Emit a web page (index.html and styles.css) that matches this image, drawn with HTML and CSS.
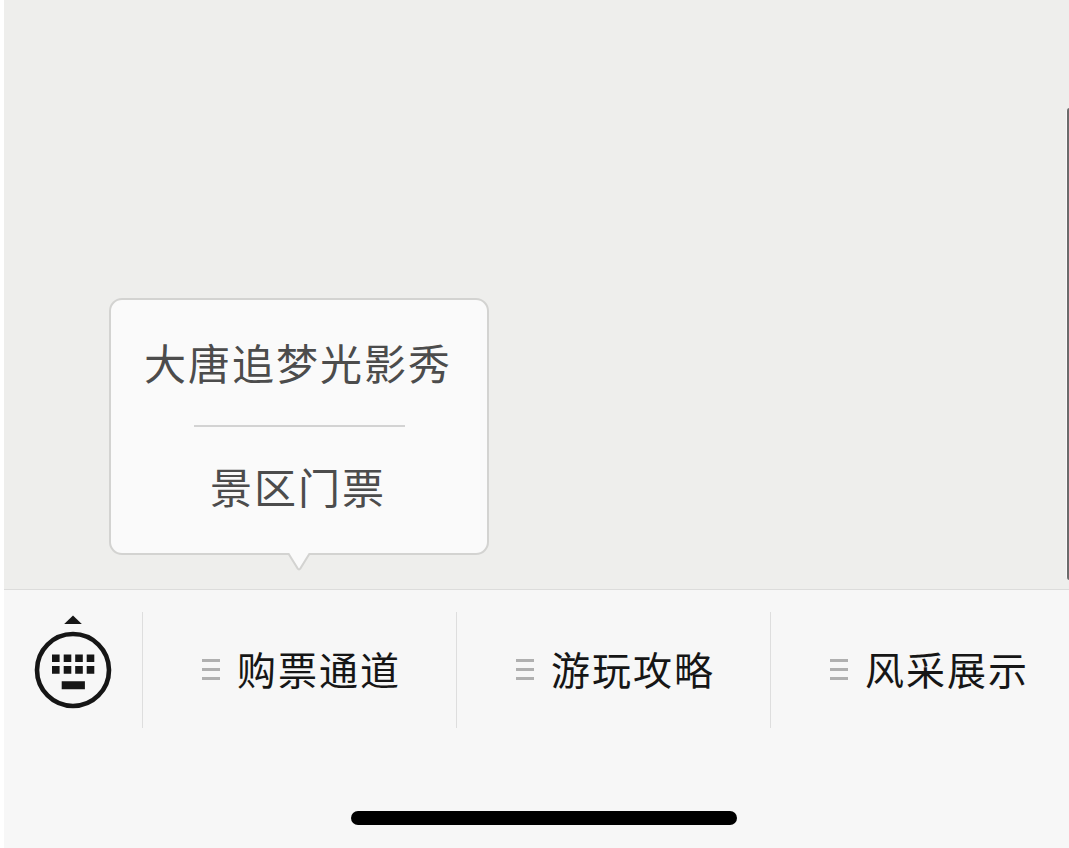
FILE: index.html
```html
<!DOCTYPE html>
<html lang="zh-CN">
<head>
<meta charset="utf-8">
<title>购票通道</title>
<link rel="stylesheet" href="styles.css">
</head>
<body>
<div class="screen">
  <main class="chat">
    <div class="scrollbar"></div>
    <div class="popup">
      <div class="popup-item">大唐追梦光影秀</div>
      <div class="popup-divider"></div>
      <div class="popup-item">景区门票</div>
      <svg class="popup-tail" width="24" height="20" viewBox="0 0 24 20">
        <path d="M0 0H24V1.4H22.3L13.4 16.2Q12 18.2 10.6 16.2L1.7 1.4H0Z" fill="#fafafa"/>
        <path d="M0 2H1.7L10.6 16.4Q12 18.4 13.4 16.4L22.3 2H24" fill="none" stroke="#d3d3d1" stroke-width="2"/>
      </svg>
    </div>
  </main>
  <footer class="bar">
    <nav class="menu">
      <button class="keyboard" aria-label="键盘">
        <svg width="80" height="96" viewBox="0 0 80 96">
          <path d="M31.2 10L40 1.4L48.8 10Z" fill="#161616"/>
          <circle cx="40" cy="56" r="36" fill="none" stroke="#161616" stroke-width="4.6"/>
          <path d="M19 40.5h7.6v7.6H19zM30.7 40.5h7.6v7.6h-7.6zM42.2 40.5h7.6v7.6h-7.6zM53.7 40.5h7.6v7.6h-7.6zM19 52.1h7.6v7.6H19zM30.7 52.1h7.6v7.6h-7.6zM42.2 52.1h7.6v7.6h-7.6zM53.7 52.1h7.6v7.6h-7.6zM28.7 67.3h23.2v8H28.7z" fill="#161616"/>
        </svg>
      </button>
      <div class="tab"><span class="lines"><i></i><i></i><i></i></span><span class="label">购票通道</span></div>
      <div class="tab"><span class="lines"><i></i><i></i><i></i></span><span class="label">游玩攻略</span></div>
      <div class="tab"><span class="lines"><i></i><i></i><i></i></span><span class="label">风采展示</span></div>
    </nav>
    <div class="home-indicator"></div>
  </footer>
</div>
</body>
</html>
```
FILE: styles.css
```css
* { box-sizing: border-box; }
body {
  margin: 0;
  background: #fff;
  font-family: "Noto Sans CJK SC", sans-serif;
  overflow: hidden;
}
.screen {
  display: flex;
  flex-direction: column;
  width: 1065px;
  height: 848px;
  margin-left: 4px;
  background: #f7f7f7;
}
.chat {
  position: relative;
  display: flex;
  align-items: flex-end;
  height: 589px;
  padding: 0 0 34px 105px;
  background: #eeeeec;
}
.scrollbar {
  position: absolute;
  top: 108px;
  right: 0;
  width: 3px;
  height: 472px;
  border-left: 1px solid #f8f8f8;
  border-radius: 3px 0 0 3px;
  background: #6b6b6b;
}
.popup {
  position: relative;
  display: flex;
  flex-direction: column;
  align-items: center;
  width: 380px;
  height: 257px;
  border: 2px solid #d3d3d1;
  border-radius: 13px;
  background: #fafafa;
}
.popup-item {
  display: flex;
  align-items: center;
  height: 125px;
  padding: 0 2px 2px 0;
  font-size: 42px;
  line-height: 60px;
  letter-spacing: 2px;
  color: #4c4c4c;
}
.popup-divider {
  width: 211px;
  height: 2px;
  background: #d3d3d3;
}
.popup-item:nth-of-type(3) { padding-bottom: 8px; }
.popup-tail {
  position: absolute;
  left: 176px;
  top: 252px;
}
.bar {
  height: 259px;
  border-top: 1px solid #dcdcdb;
}
.menu {
  display: flex;
  height: 138px;
  padding: 22px 0 0;
}
.keyboard {
  flex: none;
  align-self: flex-start;
  width: 138px;
  padding: 2px 0 0 29px;
  border: 0;
  background: none;
  text-align: left;
}
.keyboard svg { display: block; }
.tab {
  display: flex;
  align-items: center;
  gap: 17px;
  width: 314px;
  flex: none;
  padding-left: 59px;
  border-left: 1px solid #dedede;
}
.lines {
  display: flex;
  flex-direction: column;
  gap: 6px;
  width: 18px;
  padding-bottom: 1px;
}
.lines i {
  height: 3px;
  background: #b0b0b0;
}
.label {
  padding-bottom: 5px;
  font-size: 39px;
  line-height: 58px;
  letter-spacing: 2px;
  white-space: nowrap;
  color: #161616;
}
.home-indicator {
  width: 386px;
  height: 14px;
  margin: 83px 0 0 347px;
  border-radius: 7px;
  background: #000;
}
```
